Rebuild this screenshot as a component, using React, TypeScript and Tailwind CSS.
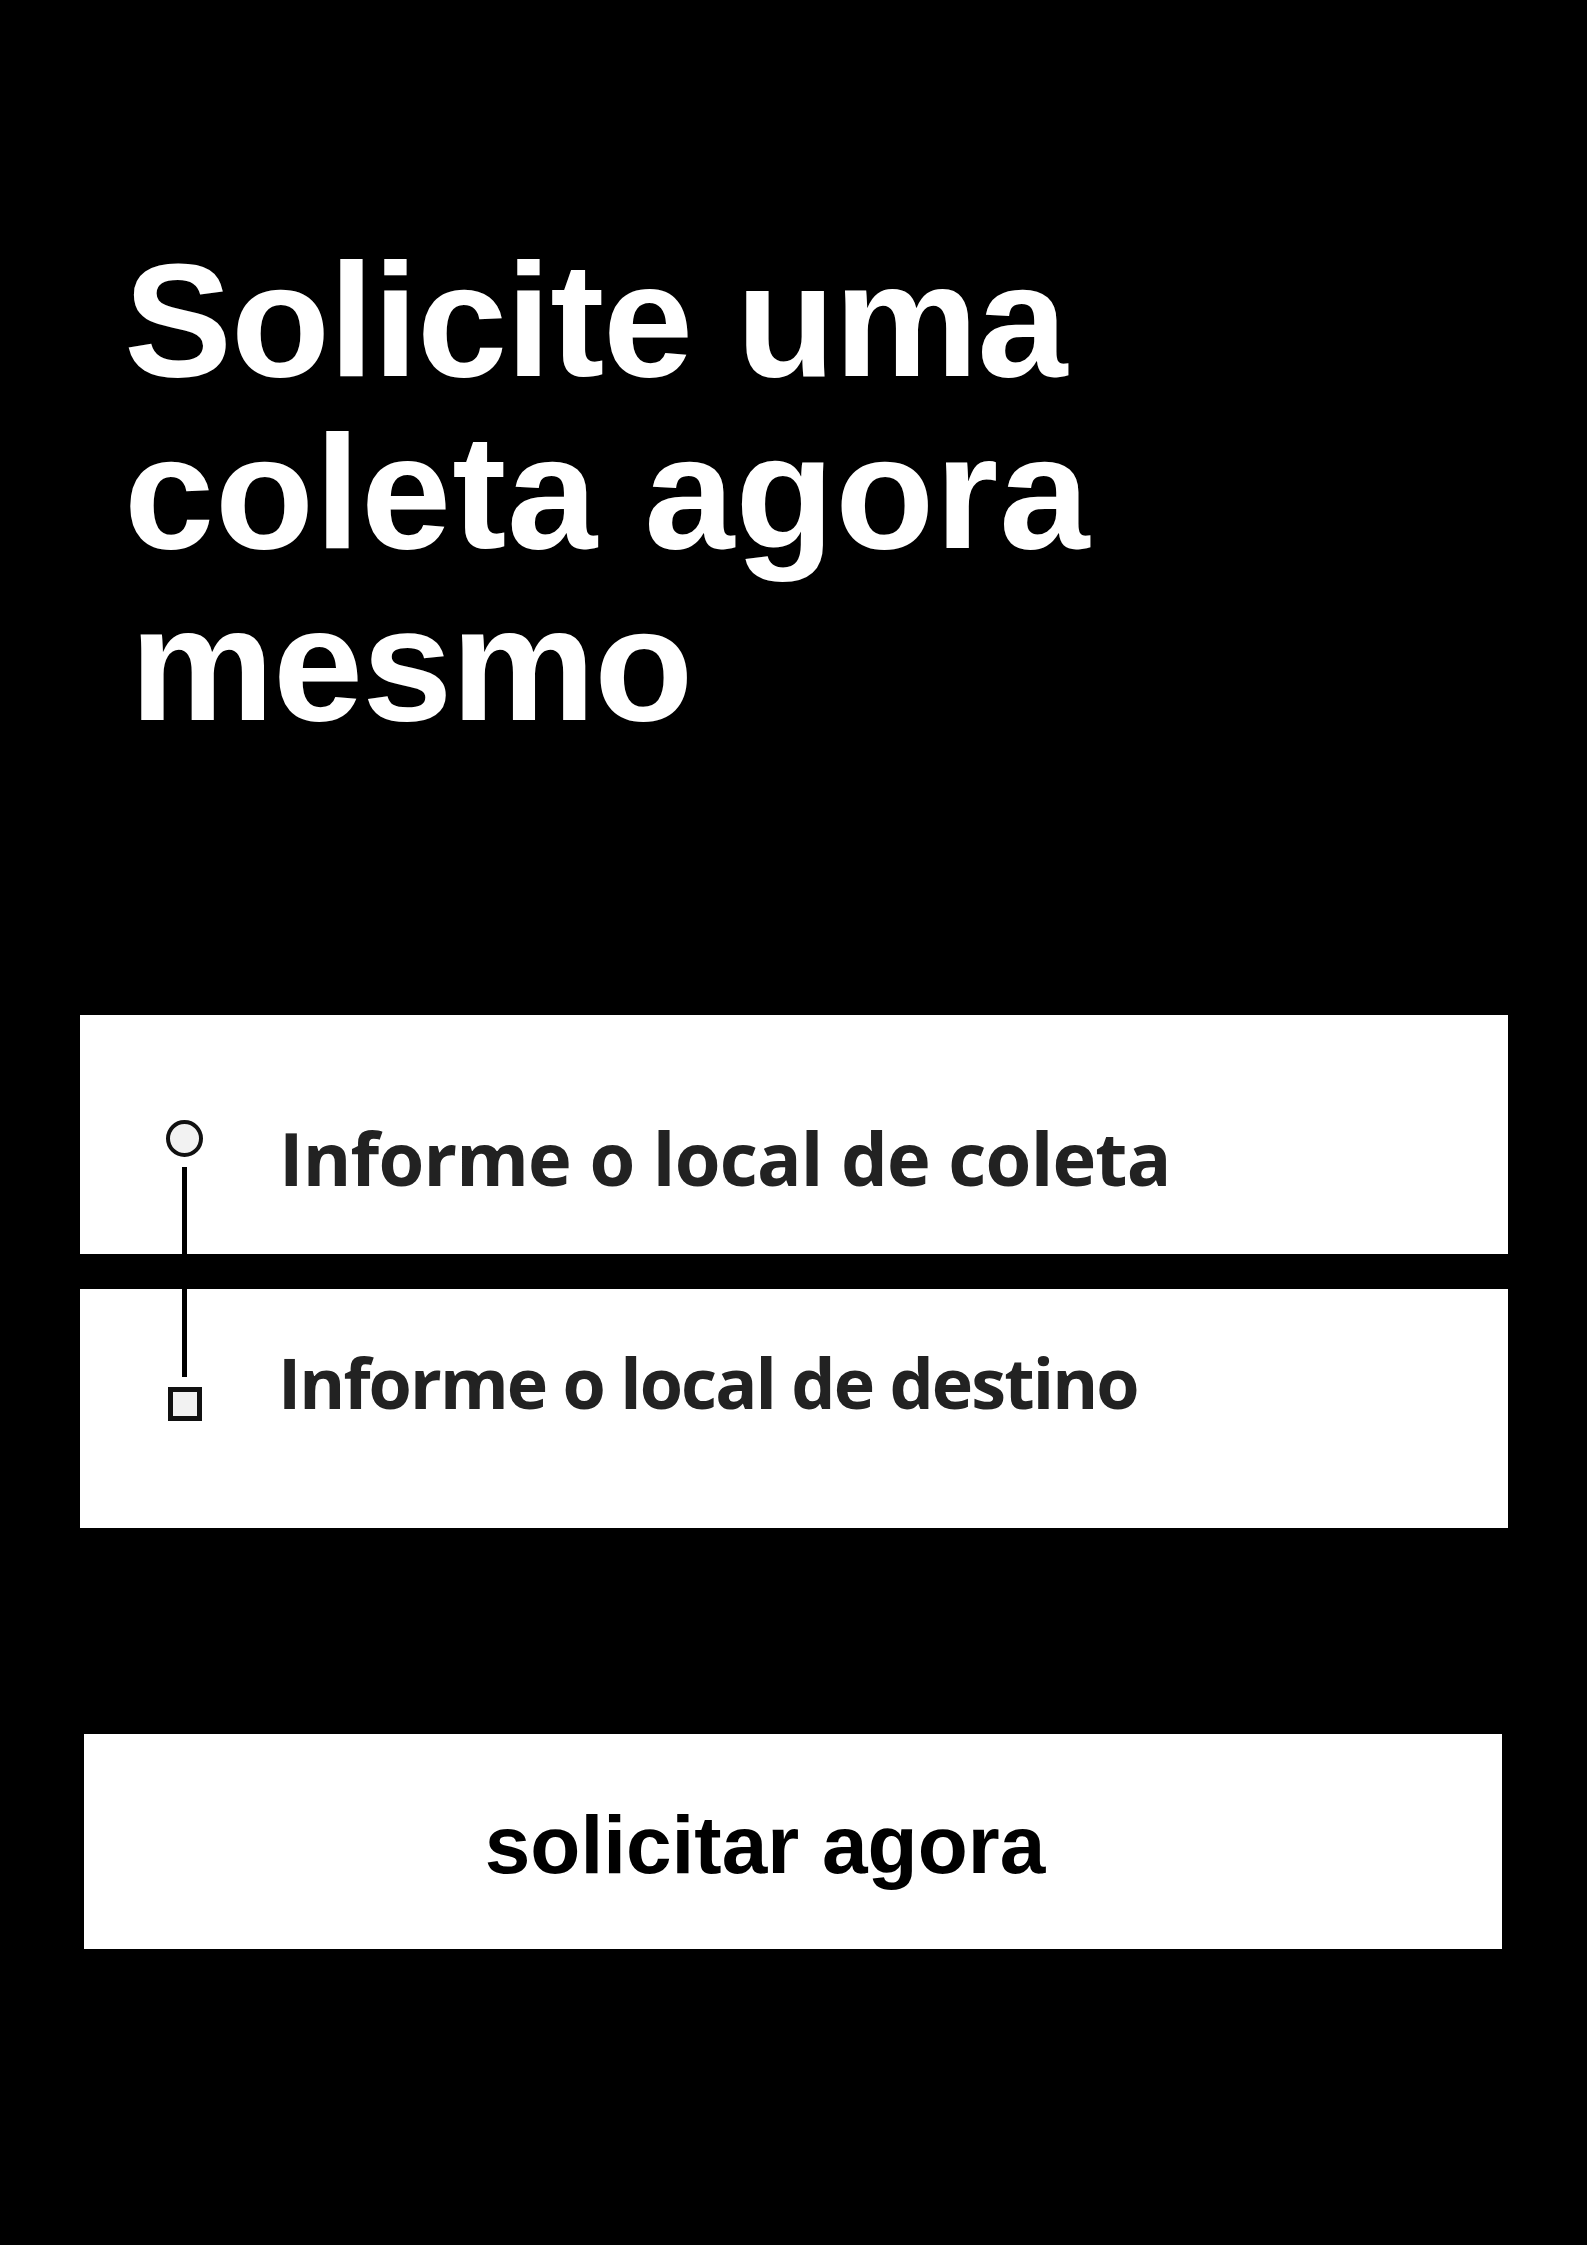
export default function App() {
    return (
        <div className="min-h-[2245px] w-full bg-black">
            <h1 className="pl-[124px] pt-[234px] font-['Liberation_Sans',Arial,sans-serif] text-[162px] leading-[172px] font-bold text-white">
                <span className="block tracking-[-1px]">Solicite uma</span>
                <span className="block tracking-[1px]">coleta agora</span>
                <span className="block pl-[6px] tracking-[-1px]">mesmo</span>
            </h1>

            <div className="relative ml-[80px] mt-[265px] flex w-[1428px] flex-col gap-[35px]">
                <div className="h-[239px] bg-white pl-[199px] pt-[106px]">
                    <p className="font-['Open_Sans',sans-serif] text-[74px] leading-none font-bold tracking-[-0.8px] text-[#222]">
                        Informe o local de coleta
                    </p>
                </div>
                <div className="h-[239px] bg-white pl-[198px] pt-[58px]">
                    <p className="font-['Open_Sans',sans-serif] text-[70px] leading-none font-bold tracking-[-1.9px] text-[#222]">
                        Informe o local de destino
                    </p>
                </div>

                {/* route marker laid over both fields: origin dot, line, destination square */}
                <div className="absolute left-[86px] top-[105px] flex w-[37px] flex-col items-center gap-[10px]">
                    <div className="h-[37px] w-[37px] rounded-full border-[4px] border-[#111] bg-[#f2f2f2]" />
                    <div className="h-[210px] w-[5px] bg-black" />
                    <div className="h-[34px] w-[34px] border-[5px] border-[#111] bg-[#f2f2f2]" />
                </div>
            </div>

            <button className="ml-[84px] mt-[206px] flex h-[215px] w-[1418px] items-center justify-center bg-white pr-[56px] pt-[6px] font-['Liberation_Sans',Arial,sans-serif] text-[82px] leading-none font-bold text-black">
                solicitar agora
            </button>
        </div>
    );
}
